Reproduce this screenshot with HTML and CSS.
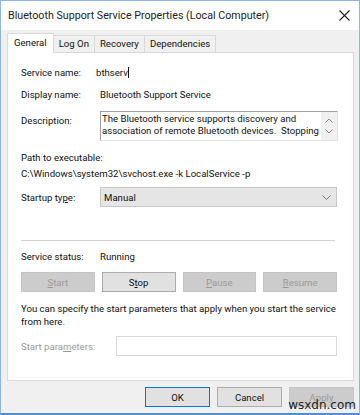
FILE: index.html
```html
<!DOCTYPE html>
<html>
<head>
<meta charset="utf-8">
<link rel="stylesheet" href="styles.css">
</head>
<body>
<div class="window">
  <div class="titlebar">
    <span class="title">Bluetooth Support Service Properties (Local Computer)</span>
    <svg class="close" width="11" height="11" viewBox="0 0 11 11"><path d="M0.5 0.5 L10.5 10.5 M10.5 0.5 L0.5 10.5" stroke="#222" stroke-width="1.1" fill="none"/></svg>
  </div>
  <div class="client">
    <div class="tabs">
      <div class="tab active">General</div>
      <div class="tab">Log On</div>
      <div class="tab">Recovery</div>
      <div class="tab">Dependencies</div>
    </div>
    <div class="panel">
      <div class="row r1"><span class="label">Service name:</span><span class="value vname">bthserv<span class="caret"></span></span></div>
      <div class="row r2"><span class="label">Display name:</span><span class="value">Bluetooth Support Service</span></div>
      <div class="row r3"><span class="label desc-label">Description:</span>
        <div class="textbox">
          <div class="tb-text">The Bluetooth service supports discovery and<br>association of remote Bluetooth devices.&nbsp; Stopping</div>
          <div class="tb-scroll">
            <svg width="8" height="5" viewBox="0 0 8 5"><path d="M0.5 4.5 L4 1 L7.5 4.5" stroke="#8a8a8a" fill="none"/></svg>
            <svg width="8" height="5" viewBox="0 0 8 5"><path d="M0.5 0.5 L4 4 L7.5 0.5" stroke="#8a8a8a" fill="none"/></svg>
          </div>
        </div>
      </div>
      <div class="path-label">Path to executable:</div>
      <div class="path">C:\Windows\system32\svchost.exe -k LocalService -p</div>
      <div class="row r4"><span class="label">Startup ty<u>p</u>e:</span>
        <div class="select"><span>Manual</span>
          <svg width="9" height="5" viewBox="0 0 9 5"><path d="M0.5 0.5 L4.5 4.5 L8.5 0.5" stroke="#777" fill="none"/></svg>
        </div>
      </div>
      <div class="sep"></div>
      <div class="row r5"><span class="label">Service status:</span><span class="value">Running</span></div>
      <div class="btns">
        <button class="btn disabled"><u>S</u>tart</button>
        <button class="btn">S<u>t</u>op</button>
        <button class="btn disabled"><u>P</u>ause</button>
        <button class="btn disabled"><u>R</u>esume</button>
      </div>
      <p class="note">You can specify the start parameters that apply when you start the service<br>from here.</p>
      <div class="row r6"><span class="label dim">Start para<u>m</u>eters:</span><div class="input"></div></div>
    </div>
    <div class="footer">
      <button class="btn fbtn default">OK</button>
      <button class="btn fbtn">Cancel</button>
      <button class="btn fbtn disabled">Apply</button>
    </div>
  </div>
  <div class="watermark">wsxdn.com</div>
</div>
</body>
</html>
```
FILE: styles.css
```css
* { box-sizing: border-box; }
html, body { margin: 0; padding: 0; }
body {
  width: 360px;
  height: 415px;
  overflow: hidden;
  font-family: Roboto, "Liberation Sans", Arial, sans-serif;
  font-size: 9.6px;
  color: #111;
  background: #fff;
}
.window {
  position: relative;
  width: 360px;
  height: 415px;
  border: 1px solid #8db4e2;
  border-bottom: 2px solid #4f8fd6;
  display: flex;
  flex-direction: column;
}
.titlebar {
  height: 29px;
  background: #fff;
  display: flex;
  align-items: center;
  justify-content: space-between;
  padding: 0 9px 0 7px;
}
.title { font-size: 10.7px; color: #222; }
.client {
  flex: 1;
  background: #f0f0f0;
  padding: 2px 5px 0 6px;
  display: flex;
  flex-direction: column;
}
.tabs {
  display: flex;
  align-items: flex-end;
  height: 20px;
}
.tab {
  height: 17px;
  line-height: 16px;
  padding: 0 5px;
  border: 1px solid #d9d9d9;
  border-bottom: none;
  margin-left: -1px;
  background: #f0f0f0;
  white-space: nowrap;
}
.tab.active {
  height: 20px;
  line-height: 18px;
  background: #fff;
  margin-left: 0;
  padding: 0 6px;
  position: relative;
  z-index: 1;
  margin-bottom: -1px;
}
.panel {
  background: #fff;
  border: 1px solid #d9d9d9;
  height: 329px;
  padding: 11px 16px 0 13px;
}
.row { display: flex; align-items: center; }
.label { width: 79px; flex: none; white-space: nowrap; }
.dim { color: #9a9a9a; }
.r1 { height: 16px; }
.vname { margin-left: -4px; }
.caret { display: inline-block; width: 1px; height: 11px; background: #111; vertical-align: -2px; }
.r2 { height: 16px; margin-top: 6px; }
.r3 { align-items: flex-start; margin-top: 9px; }
.desc-label { padding-top: 4px; }
.textbox {
  flex: 1;
  height: 30px;
  border: 1px solid #a0a0a0;
  border-right-color: #e3e3e3;
  border-bottom-color: #e3e3e3;
  display: flex;
}
.tb-text { flex: 1; padding: 1px 2px 0 1px; line-height: 12px; overflow: hidden; white-space: nowrap; }
.tb-scroll {
  width: 16px;
  background: #f0f0f0;
  display: flex;
  flex-direction: column;
  align-items: center;
  justify-content: space-around;
  padding: 3px 0;
}
.path-label { margin-top: 9px; height: 16px; line-height: 16px; }
.path { height: 16px; line-height: 16px; }
.r4 { margin-top: 5px; }
.select {
  flex: 1;
  height: 20px;
  background: #e5e5e5;
  border: 1px solid #c8c8c8;
  display: flex;
  align-items: center;
  justify-content: space-between;
  padding: 0 5px 0 3px;
}
.sep { height: 1px; background: #d0d0d0; margin-top: 33px; margin-right: 2px; }
.r5 { height: 16px; margin-top: 7px; }
.btns {
  display: grid;
  grid-template-columns: repeat(4, 1fr);
  column-gap: 7px;
  margin-top: 8px;
}
.btn {
  font: inherit;
  height: 20px;
  background: #e1e1e1;
  border: 1px solid #adadad;
  color: #111;
  padding: 0;
}
.btn.disabled { background: #cccccc; border-color: #c4c4c4; color: #9b9b9b; }
.note { margin: 10px 0 0 0; line-height: 13px; white-space: nowrap; }
.r6 { margin-top: 8px; }
.r6 .label { width: 95px; }
.input { flex: 1; height: 20px; border: 1px solid #d9d9d9; background: #fff; }
.footer {
  display: flex;
  justify-content: flex-end;
  gap: 7px;
  margin-top: 6px;
}
.fbtn { width: 65px; height: 20px; }
.fbtn.default { border-color: #0078d7; }
.watermark {
  position: absolute;
  right: 3px;
  bottom: 1px;
  font-family: "DejaVu Sans", sans-serif;
  font-size: 12px;
  color: #222;
}
```
